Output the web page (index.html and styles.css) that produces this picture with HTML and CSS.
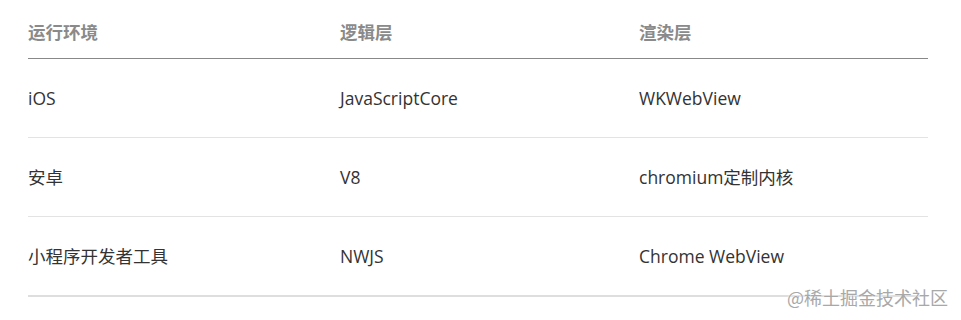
FILE: index.html
```html
<!DOCTYPE html>
<html lang="zh-CN">
<head>
<meta charset="utf-8">
<link rel="stylesheet" href="styles.css">
</head>
<body>
<div class="page">
  <table class="env-table">
    <thead>
      <tr><th class="c1">运行环境</th><th class="c2">逻辑层</th><th class="c3">渲染层</th></tr>
    </thead>
    <tbody>
      <tr><td>iOS</td><td>JavaScriptCore</td><td>WKWebView</td></tr>
      <tr><td>安卓</td><td>V8</td><td>chromium定制内核</td></tr>
      <tr class="last"><td>小程序开发者工具</td><td>NWJS</td><td>Chrome WebView</td></tr>
    </tbody>
  </table>
  <div class="watermark">@稀土掘金技术社区</div>
</div>
</body>
</html>
```
FILE: styles.css
```css
html, body {
  margin: 0;
  padding: 0;
  background: #fff;
}
.page {
  position: relative;
  width: 961px;
  height: 320px;
  padding: 0 33px 0 28px;
  box-sizing: border-box;
  font-family: "Open Sans", "Noto Sans CJK SC", sans-serif;
  font-size: 17.5px;
  color: #333;
}
.env-table {
  width: 900px;
  border-collapse: collapse;
  table-layout: fixed;
}
.env-table th, .env-table td {
  text-align: left;
  padding: 0;
  line-height: 24px;
}
.env-table .c1 { width: 312px; }
.env-table .c2 { width: 299px; }
.env-table th {
  color: #8a8a8a;
  font-weight: bold;
  padding: 20px 0 14px;
  border-bottom: 1px solid #888;
}
.env-table td {
  padding: 27px 0;
  border-bottom: 1px solid #e3e3e3;
}
.env-table tr.last td {
  border-bottom: 2px solid #dedede;
}
.watermark {
  position: absolute;
  right: 13px;
  top: 285px;
  font-size: 18px;
  line-height: 24px;
  color: #a8a8a8;
  font-family: "Noto Sans CJK SC", sans-serif;
  text-shadow: 0 0 2px #fff, 0 0 1px #fff;
}
```
